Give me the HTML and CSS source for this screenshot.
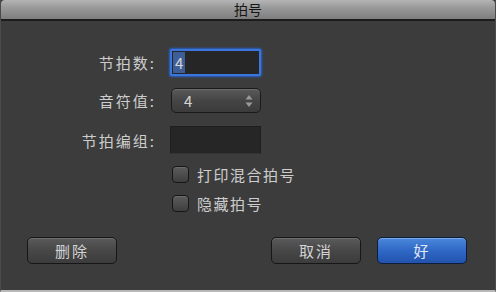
FILE: index.html
```html
<!DOCTYPE html>
<html lang="zh-CN">
<head>
  <meta charset="UTF-8">
  <meta name="viewport" content="width=device-width, initial-scale=1.0">
  <title>拍号</title>
  <link rel="stylesheet" href="styles.css">
</head>
<body>

  <div class="window">
    <div class="titlebar">拍号</div>

    <div class="content">
      <div class="form">
        <div class="row row-beats">
          <label class="label">节拍数:</label>
          <div class="field focused"><span class="selected">4</span></div>
        </div>

        <div class="row row-note">
          <label class="label">音符值:</label>
          <div class="popup">
            <span>4</span>
            <svg class="arrows" width="8" height="14" viewBox="0 0 8 14">
              <path d="M4 1 L7.5 5.5 L0.5 5.5 Z" fill="#9a9a9a"/>
              <path d="M4 13 L7.5 8.5 L0.5 8.5 Z" fill="#9a9a9a"/>
            </svg>
          </div>
        </div>

        <div class="row row-group">
          <label class="label">节拍编组:</label>
          <div class="field"></div>
        </div>

        <div class="row row-check">
          <span></span>
          <label class="check"><span class="box"></span>打印混合拍号</label>
        </div>

        <div class="row row-check row-check2">
          <span></span>
          <label class="check"><span class="box"></span>隐藏拍号</label>
        </div>
      </div>

      <div class="buttons">
        <button class="btn">删除</button>
        <div class="spacer"></div>
        <button class="btn">取消</button>
        <button class="btn primary">好</button>
      </div>
    </div>
  </div>

</body>
</html>
```

FILE: styles.css
```css
body {
  margin: 0;
  font-family: "Noto Sans CJK SC", "Noto Sans", sans-serif;
  background-color: #3c3c3c;
}

.window {
  width: 496px;
  height: 292px;
  box-sizing: border-box;
  display: flex;
  flex-direction: column;
  background-color: #3c3c3c;
  border-left: 1px solid #4a4a4a;
  border-right: 1px solid #4a4a4a;
  border-bottom: 2px solid #b8b8b8;
  overflow: hidden;
}

.titlebar {
  height: 19px;
  line-height: 19px;
  text-align: center;
  font-size: 14px;
  color: #161616;
  background: linear-gradient(#b4b4b4, #9a9a9a 40%, #7e7e7e);
  border-bottom: 2px solid #1c1c1c;
  border-radius: 4px 4px 0 0;
}

.content {
  flex: 1;
  display: flex;
  flex-direction: column;
}

.form {
  display: flex;
  flex-direction: column;
  padding-top: 28px;
}

.row {
  display: grid;
  grid-template-columns: 155px 91px;
  column-gap: 14px;
  align-items: center;
}

.row-beats { height: 27px; }
.row-note { height: 25px; margin-top: 12px; }
.row-group { height: 28px; margin-top: 13px; }
.row-check { height: 18px; margin-top: 10px; }
.row-check2 { margin-top: 11px; }

.label {
  text-align: right;
  font-size: 15px;
  letter-spacing: 2px;
  color: #cdcdcd;
}

.field {
  height: 100%;
  box-sizing: border-box;
  background-color: #262626;
  border: 1px solid #1e1e1e;
  border-bottom-color: #333;
  display: flex;
  align-items: center;
  padding-left: 3px;
}

.field.focused {
  border: 2px solid #3a76dc;
  box-shadow: 0 0 2px 1px #2b5fc4;
  border-radius: 2px;
  padding-left: 1px;
}

.selected {
  background-color: #3d5e96;
  color: #d6d6d6;
  font-size: 15px;
  line-height: 21px;
  padding: 0 2px;
}

.popup {
  height: 100%;
  margin-left: 1px;
  box-sizing: border-box;
  border: 1px solid #1a1a1a;
  border-radius: 5px;
  background: linear-gradient(#5a5a5a, #454545 50%, #3b3b3b);
  box-shadow: inset 0 1px 0 #6a6a6a;
  display: flex;
  align-items: center;
  justify-content: space-between;
  padding: 0 7px 0 12px;
  color: #d6d6d6;
  font-size: 15px;
}

.check {
  display: flex;
  align-items: center;
  font-size: 15px;
  letter-spacing: 1.5px;
  color: #cdcdcd;
  white-space: nowrap;
  margin-left: 2px;
}

.box {
  flex-shrink: 0;
  width: 15px;
  height: 15px;
  border: 1px solid #161616;
  border-radius: 4px;
  background: linear-gradient(#5c5c5c, #3e3e3e);
  box-shadow: inset 0 1px 0 #6c6c6c;
  margin-right: 8px;
}

.buttons {
  display: flex;
  margin-top: 26px;
  padding: 0 28px 0 26px;
}

.spacer {
  flex: 1;
}

.btn {
  width: 90px;
  height: 27px;
  margin-left: 16px;
  border: 1px solid #161616;
  border-radius: 5px;
  background: linear-gradient(#5a5a5a, #474747 50%, #3c3c3c);
  box-shadow: inset 0 1px 0 #6e6e6e;
  color: #d4d4d4;
  font-family: "Noto Sans CJK SC", sans-serif;
  font-size: 15px;
  letter-spacing: 2px;
  padding: 0;
}

.btn:first-child {
  margin-left: 0;
}

.btn.primary {
  border-color: #0d1d3c;
  background: linear-gradient(#4c88dc, #2f68c6 50%, #2253ad);
  box-shadow: inset 0 1px 0 #79a8ea;
  color: #e2e8f2;
}
```
